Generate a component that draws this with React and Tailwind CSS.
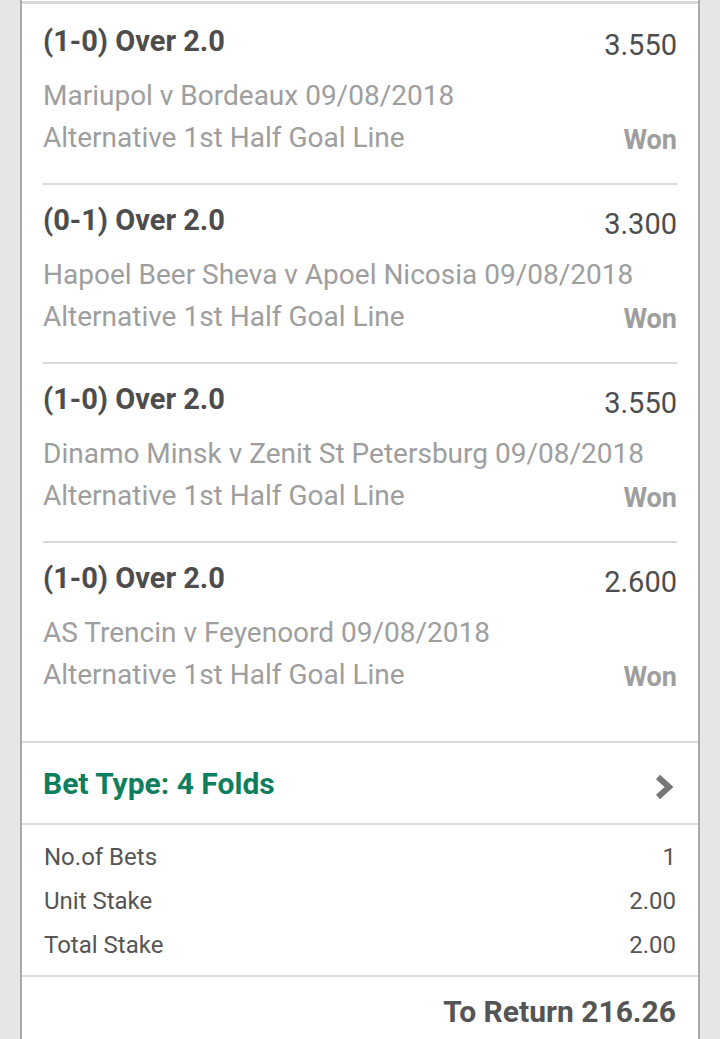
const selections = [
  {
    pick: "(1-0) Over 2.0",
    odds: "3.550",
    event: "Mariupol v Bordeaux 09/08/2018",
    market: "Alternative 1st Half Goal Line",
  },
  {
    pick: "(0-1) Over 2.0",
    odds: "3.300",
    event: "Hapoel Beer Sheva v Apoel Nicosia 09/08/2018",
    market: "Alternative 1st Half Goal Line",
  },
  {
    pick: "(1-0) Over 2.0",
    odds: "3.550",
    event: "Dinamo Minsk v Zenit St Petersburg 09/08/2018",
    market: "Alternative 1st Half Goal Line",
  },
  {
    pick: "(1-0) Over 2.0",
    odds: "2.600",
    event: "AS Trencin v Feyenoord 09/08/2018",
    market: "Alternative 1st Half Goal Line",
  },
];

const summary = [
  { label: "No.of Bets", value: "1" },
  { label: "Unit Stake", value: "2.00" },
  { label: "Total Stake", value: "2.00" },
];

function Selection({ item, first, last }) {
  return (
    <div className="px-[21px]">
      <div
        className={`${first ? "pt-[21px]" : "pt-[19px]"} ${
          last ? "pb-[45px]" : "pb-[24px] border-b-2 border-[#d9d9d9]"
        }`}
      >
        <div className="flex h-[32px] items-center justify-between leading-[32px]">
          <span className="text-[29px] font-bold text-[#4d4d4d]">
            {item.pick}
          </span>
          <span className="translate-y-[4px] text-[29px] text-[#4d4d4d]">
            {item.odds}
          </span>
        </div>
        <div className="mt-[18px] text-[28px] leading-[42px] text-[#9e9e9e]">
          {item.event}
        </div>
        <div className="flex h-[42px] items-center justify-between leading-[42px]">
          <span className="text-[28px] text-[#9e9e9e]">{item.market}</span>
          <span className="translate-y-[2px] text-[27px] font-bold text-[#9e9e9e]">
            Won
          </span>
        </div>
      </div>
    </div>
  );
}

export default function App() {
  return (
    <div
      className="min-h-screen bg-[#e6e6e6] px-[20px]"
      style={{ fontFamily: "Roboto, 'Noto Sans', sans-serif" }}
    >
      <div className="border-x-2 border-[#a9a9a9] bg-white">
        <div className="h-[4px] border-b-[3px] border-[#d9d9d9] bg-white" />

        {selections.map((item, i) => (
          <Selection
            key={i}
            item={item}
            first={i === 0}
            last={i === selections.length - 1}
          />
        ))}

        <div className="flex h-[84px] items-center justify-between border-y-2 border-[#d9d9d9] pl-[21px] pr-[23px]">
          <span className="text-[30px] font-bold text-[#0d7f5e]">
            Bet Type: 4 Folds
          </span>
          <svg
            width="22"
            height="26"
            viewBox="0 0 22 26"
            className="translate-y-[4px]"
          >
            <path
              d="M5 3 L16 13 L5 23"
              fill="none"
              stroke="#777777"
              strokeWidth="6"
              strokeLinejoin="miter"
            />
          </svg>
        </div>

        <div className="border-b-2 border-[#d9d9d9] px-[22px] pt-[10px] pb-[8px]">
          {summary.map((row) => (
            <div
              key={row.label}
              className="flex h-[44px] items-center justify-between text-[24px] text-[#555555]"
            >
              <span>{row.label}</span>
              <span>{row.value}</span>
            </div>
          ))}
        </div>

        <div className="flex h-[68px] items-center justify-end px-[22px]">
          <span className="text-[30px] font-bold text-[#555555]">
            To Return 216.26
          </span>
        </div>
      </div>
    </div>
  );
}
